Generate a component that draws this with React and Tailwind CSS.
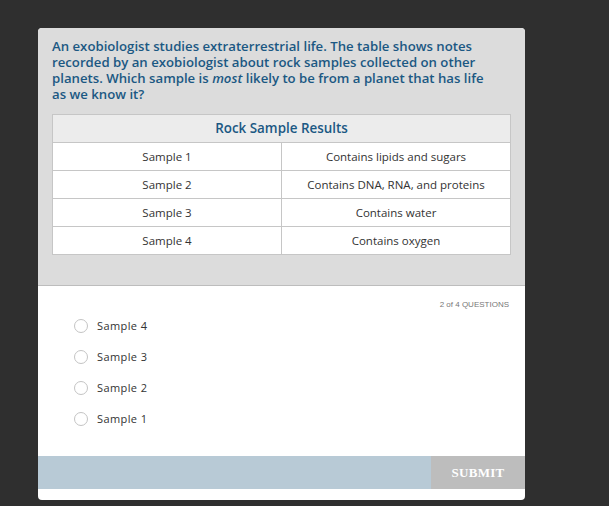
const rows = [
  ['Sample 1', 'Contains lipids and sugars'],
  ['Sample 2', 'Contains DNA, RNA, and proteins'],
  ['Sample 3', 'Contains water'],
  ['Sample 4', 'Contains oxygen'],
];

const choices = ['Sample 4', 'Sample 3', 'Sample 2', 'Sample 1'];

export default function App() {
  return (
    <div className="h-[506px] w-[609px] bg-[#2f2f2f] pl-[38px] pt-[28px] font-['Open_Sans',sans-serif]">
      <div className="w-[487px] overflow-hidden rounded-[4px] bg-white">
        {/* question */}
        <div className="border-b border-[#bdbdbd] bg-[#dcdcdc] px-[14px] pb-[30px] pt-[10px]">
          <p className="w-[448px] text-[13.2px] font-semibold leading-[16px] text-[#1b5883]">
            An exobiologist studies extraterrestrial life. The table shows notes recorded by an exobiologist about rock samples collected on other planets. Which sample is <em>most</em> likely to be from a planet that has life as we know it?
          </p>
          <table className="mt-[12px] w-[459px] border-collapse bg-white text-[11.5px] text-[#333]">
            <thead>
              <tr>
                <th colSpan={2} className="h-[28px] border border-[#c6c6c6] bg-[#ececec] text-[13.4px] font-semibold text-[#1b5883]">
                  Rock Sample Results
                </th>
              </tr>
            </thead>
            <tbody>
              {rows.map(([a, b]) => (
                <tr key={a}>
                  <td className="h-[28px] w-[229px] border border-[#c6c6c6] text-center">{a}</td>
                  <td className="h-[28px] border border-[#c6c6c6] text-center">{b}</td>
                </tr>
              ))}
            </tbody>
          </table>
        </div>

        {/* answers */}
        <div className="pl-[36px] pr-[16px] pt-[13px]">
          <div className="text-right font-['Liberation_Sans',sans-serif] text-[8px] text-[#777]">2 of 4 QUESTIONS</div>
          <div className="mt-[8px] flex flex-col gap-[17px] pb-[30px]">
            {choices.map((c) => (
              <label key={c} className="flex items-center gap-[9px] text-[11px] leading-[14px] tracking-[0.4px] text-[#333]">
                <span className="h-[14px] w-[14px] rounded-full border border-[#c4c4c4] bg-white" />
                {c}
              </label>
            ))}
          </div>
        </div>

        {/* submit bar */}
        <div className="flex h-[33px]">
          <div className="flex-1 bg-[#b8cad6]" />
          <button className="w-[94px] bg-[#bdbdbd] font-['Liberation_Serif',serif] text-[13px] font-bold tracking-[0.3px] text-white">
            SUBMIT
          </button>
        </div>
        <div className="h-[11px]" />
      </div>
    </div>
  );
}
